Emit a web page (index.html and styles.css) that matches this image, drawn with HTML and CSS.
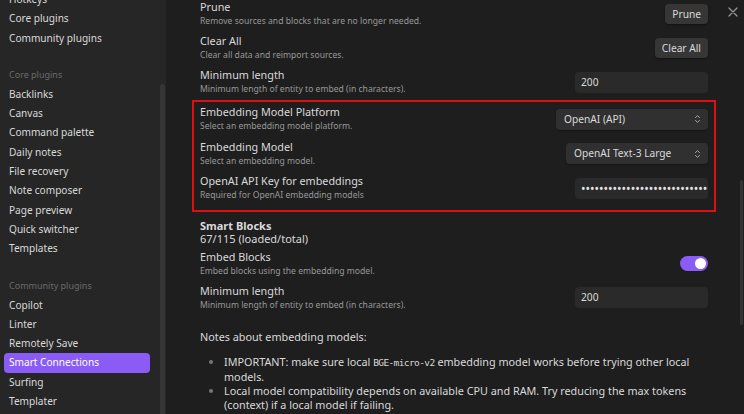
FILE: index.html
```html
<!DOCTYPE html>
<html lang="en">
<head>
    <meta charset="UTF-8">
    <title>Settings - Smart Connections</title>
    <link rel="stylesheet" href="styles.css">
</head>
<body>
<div class="app">
    <aside class="sidebar">
        <nav class="nav">
            <div class="nav-item">Hotkeys</div>
            <div class="nav-item">Core plugins</div>
            <div class="nav-item">Community plugins</div>

            <div class="nav-header">Core plugins</div>
            <div class="nav-item">Backlinks</div>
            <div class="nav-item">Canvas</div>
            <div class="nav-item">Command palette</div>
            <div class="nav-item">Daily notes</div>
            <div class="nav-item">File recovery</div>
            <div class="nav-item">Note composer</div>
            <div class="nav-item">Page preview</div>
            <div class="nav-item">Quick switcher</div>
            <div class="nav-item">Templates</div>

            <div class="nav-header">Community plugins</div>
            <div class="nav-item">Copilot</div>
            <div class="nav-item">Linter</div>
            <div class="nav-item">Remotely Save</div>
            <div class="nav-item active">Smart Connections</div>
            <div class="nav-item">Surfing</div>
            <div class="nav-item">Templater</div>
        </nav>
        <div class="side-scroll"></div>
    </aside>

    <main class="content">
        <div class="close">
            <svg width="10" height="10" viewBox="0 0 10 10"><path d="M1 1L9 9M9 1L1 9" stroke="#9a9a9a" stroke-width="1.2" stroke-linecap="round"/></svg>
        </div>
        <div class="main-scroll"></div>

        <div class="settings">
            <div class="setting">
                <div class="info">
                    <div class="name">Prune</div>
                    <div class="desc">Remove sources and blocks that are no longer needed.</div>
                </div>
                <button class="btn">Prune</button>
            </div>
            <div class="setting">
                <div class="info">
                    <div class="name">Clear All</div>
                    <div class="desc">Clear all data and reimport sources.</div>
                </div>
                <button class="btn">Clear All</button>
            </div>
            <div class="setting">
                <div class="info">
                    <div class="name">Minimum length</div>
                    <div class="desc">Minimum length of entity to embed (in characters).</div>
                </div>
                <div class="field">200</div>
            </div>

            <div class="highlight">
                <div class="setting tall">
                    <div class="info">
                        <div class="name">Embedding Model Platform</div>
                        <div class="desc">Select an embedding model platform.</div>
                    </div>
                    <div class="dropdown wide">OpenAI (API)
                        <svg class="chev" width="7" height="10" viewBox="0 0 7 10"><path d="M1.5 3.6L3.5 1.6L5.5 3.6M1.5 6.4L3.5 8.4L5.5 6.4" fill="none" stroke="#a8a8a8" stroke-width="1" stroke-linecap="round" stroke-linejoin="round"/></svg>
                    </div>
                </div>
                <div class="setting tall">
                    <div class="info">
                        <div class="name">Embedding Model</div>
                        <div class="desc">Select an embedding model.</div>
                    </div>
                    <div class="dropdown">OpenAI Text-3 Large
                        <svg class="chev" width="7" height="10" viewBox="0 0 7 10"><path d="M1.5 3.6L3.5 1.6L5.5 3.6M1.5 6.4L3.5 8.4L5.5 6.4" fill="none" stroke="#a8a8a8" stroke-width="1" stroke-linecap="round" stroke-linejoin="round"/></svg>
                    </div>
                </div>
                <div class="setting tall">
                    <div class="info">
                        <div class="name">OpenAI API Key for embeddings</div>
                        <div class="desc">Required for OpenAI embedding models</div>
                    </div>
                    <div class="field secret">••••••••••••••••••••••••••••••••</div>
                </div>
            </div>

            <div class="block-head">
                <div class="bold">Smart Blocks</div>
                <div class="count">67/115 (loaded/total)</div>
            </div>

            <div class="setting">
                <div class="info">
                    <div class="name">Embed Blocks</div>
                    <div class="desc">Embed blocks using the embedding model.</div>
                </div>
                <div class="toggle"><span class="knob"></span></div>
            </div>
            <div class="setting">
                <div class="info">
                    <div class="name">Minimum length</div>
                    <div class="desc">Minimum length of entity to embed (in characters).</div>
                </div>
                <div class="field">200</div>
            </div>

            <div class="notes">
                <p>Notes about embedding models:</p>
                <ul>
                    <li>IMPORTANT: make sure local <code>BGE-micro-v2</code> embedding model works before trying other local models.</li>
                    <li>Local model compatibility depends on available CPU and RAM. Try reducing the max tokens (context) if a local model if failing.</li>
                    <li>API models are not dependent on local compute, but they require an API key and send your notes to third-party servers.</li>
                </ul>
            </div>
        </div>
    </main>
</div>
</body>
</html>
```

FILE: styles.css
```css
html, body {
  margin: 0;
  height: 100%;
  overflow: hidden;
}
body {
  background: #1e1e1e;
  font-family: 'Noto Sans', 'Open Sans', Arial, sans-serif;
  color: #dadada;
}
.app {
  display: flex;
  height: 414px;
}
.sidebar {
  width: 166px;
  flex-shrink: 0;
  background: #262626;
  position: relative;
  overflow: hidden;
}
.nav {
  margin-top: -10px;
  padding-left: 4px;
  width: 146px;
}
.nav-item {
  height: 19.3px;
  line-height: 19.3px;
  padding-left: 5px;
  font-size: 10.1px;
  color: #dadada;
  border-radius: 4px;
  white-space: nowrap;
}
.nav-item.active {
  background: #8a5cf5;
  color: #fff;
}
.nav-header {
  margin-top: 16px;
  height: 21px;
  line-height: 21px;
  padding-left: 5px;
  font-size: 9px;
  color: #6a6a6a;
}
.side-scroll {
  position: absolute;
  left: 160px;
  top: 84px;
  width: 5px;
  bottom: 0;
  background: #353535;
  border-radius: 3px 3px 0 0;
}
.content {
  flex: 1;
  position: relative;
  overflow: hidden;
  padding: 0 36px 0 34px;
}
.close {
  position: absolute;
  right: 6px;
  top: 0;
}
.main-scroll {
  position: absolute;
  right: 1px;
  top: 180px;
  width: 3px;
  height: 145px;
  background: #333;
  border-radius: 2px;
}
.settings {
  margin-top: -3px;
}
.setting {
  display: flex;
  align-items: center;
  justify-content: space-between;
  height: 34px;
}
.setting.tall {
  height: 34.5px;
}
.name {
  font-size: 10.8px;
  line-height: 14px;
  color: #dadada;
}
.desc {
  font-size: 8.6px;
  line-height: 14px;
  color: #999;
}
.btn {
  background: #363636;
  color: #dadada;
  border: none;
  border-radius: 4px;
  height: 20px;
  padding: 0 7px;
  font-family: inherit;
  font-size: 10.2px;
  box-shadow: 0 1px 2px #0006;
}
.field {
  box-sizing: border-box;
  width: 133px;
  height: 21px;
  line-height: 21px;
  padding: 0 6px;
  background: #2a2a2a;
  border-radius: 4px;
  font-size: 10.2px;
  color: #dadada;
}
.field.secret {
  overflow: hidden;
  white-space: nowrap;
  font-size: 12px;
  letter-spacing: 0;
  color: #e6e6e6;
}
.dropdown {
  box-sizing: border-box;
  width: 142px;
  height: 21px;
  line-height: 21px;
  padding: 0 8px;
  background: #303030;
  border-radius: 4px;
  font-size: 10.2px;
  color: #dadada;
  position: relative;
  box-shadow: 0 1px 2px #0005;
}
.dropdown.wide {
  width: 152px;
}
.chev {
  position: absolute;
  right: 7px;
  top: 5.5px;
}
.highlight {
  margin: 1px -8px 0;
  padding: 0 6px 4px;
  border: 2px solid #e01010;
}
.block-head {
  margin-top: 7px;
  height: 28px;
  font-size: 11px;
  line-height: 13px;
}
.bold {
  font-weight: 700;
}
.count {
  color: #dadada;
}
.toggle {
  width: 28px;
  height: 15px;
  border-radius: 8px;
  background: #8a5cf5;
  position: relative;
}
.knob {
  position: absolute;
  right: 2px;
  top: 2px;
  width: 11px;
  height: 11px;
  border-radius: 50%;
  background: #fff;
}
.notes {
  margin-top: 15px;
  font-size: 10.8px;
  line-height: 13.8px;
}
.notes p {
  margin: 0 0 12px;
}
.notes ul {
  margin: 0;
  padding-left: 24px;
  padding-right: 0;
}
.notes li::marker {
  color: #777;
}
code {
  font-family: 'DejaVu Sans Mono', monospace;
  font-size: 9.5px;
  letter-spacing: -0.6px;
}
```
